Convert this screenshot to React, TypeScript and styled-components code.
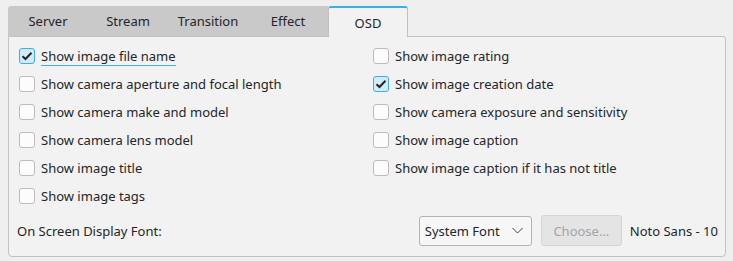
import React from "react";
import styled, { createGlobalStyle } from "styled-components";

const Global = createGlobalStyle`
  html, body { margin: 0; padding: 0; background: #efefef; }
  body { font-family: "Noto Sans", "DejaVu Sans", sans-serif; font-size: 13px; color: #232629; }
  * { box-sizing: border-box; }
`;

const Window = styled.div`
  width: 733px;
  height: 261px;
  padding: 6px 7px 5px 8px;
  display: flex;
  flex-direction: column;
`;

const TabBar = styled.div`
  display: flex;
  height: 31px;
  margin-bottom: -1px;
  position: relative;
  z-index: 1;
`;

const InactiveTabs = styled.div`
  display: flex;
  background: #c9c9c9;
  border-top-left-radius: 3px;
  height: 30px;
`;

const Tab = styled.div<{ $active?: boolean }>`
  width: 80px;
  display: flex;
  align-items: center;
  justify-content: center;
  height: ${(p) => (p.$active ? "31px" : "30px")};
  padding-top: ${(p) => (p.$active ? "1px" : "0")};
  ${(p) =>
    p.$active &&
    `
    background: #f2f2f2;
    border: 1px solid #bfbfbf;
    border-bottom: none;
    border-top: 2px solid #3daee9;
    border-radius: 3px 3px 0 0;
  `}
`;

const Panel = styled.div`
  flex: 1;
  background: #f2f2f2;
  border: 1px solid #c2c2c2;
  border-radius: 0 3px 4px 4px;
  padding: 5px 7px 10px 8px;
  display: flex;
  flex-direction: column;
`;

const Grid = styled.div`
  display: grid;
  grid-template-columns: 354px 1fr;
  grid-auto-rows: 28px;
`;

const Row = styled.label`
  display: flex;
  align-items: center;
  gap: 6px;
  padding-left: 2px;
`;

const Box = styled.span<{ $checked?: boolean }>`
  width: 16px;
  height: 16px;
  border-radius: 3px;
  border: 1px solid ${(p) => (p.$checked ? "#3daee9" : "#bcbcbc")};
  background: ${(p) => (p.$checked ? "#d3ebf8" : "#fcfcfc")};
  display: flex;
  align-items: center;
  justify-content: center;
  flex: none;
`;

const Label = styled.span<{ $focus?: boolean }>`
  line-height: 18px;
  ${(p) => p.$focus && `border-bottom: 1px solid #3daee9; line-height: 17px; margin-top: 1px;`}
`;

const Bottom = styled.div`
  margin-top: 5px;
  display: flex;
  align-items: center;
  height: 31px;
`;

const FontLabel = styled.span`
  flex: 1;
`;

const Combo = styled.div`
  width: 113px;
  height: 30px;
  border: 1px solid #b3b3b3;
  border-radius: 3px;
  background: #f7f7f7;
  display: flex;
  align-items: center;
  justify-content: space-between;
  padding: 0 8px 0 5px;
  margin-right: 9px;
`;

const Choose = styled.div`
  width: 81px;
  height: 31px;
  border: 1px solid #d4d4d4;
  border-radius: 3px;
  background: #e4e4e4;
  color: #a3a4a5;
  display: flex;
  align-items: center;
  justify-content: center;
  margin-right: 8px;
`;

const FontName = styled.span`
  margin-right: 0;
`;

const Check = () => (
  <svg width="12" height="10" viewBox="0 0 12 10">
    <path d="M1.5 5.2 L4.5 8 L10.5 1.8" fill="none" stroke="#232629" strokeWidth="2" />
  </svg>
);

const Chevron = () => (
  <svg width="11" height="7" viewBox="0 0 11 7">
    <path d="M0.5 1 L5.5 6 L10.5 1" fill="none" stroke="#3b3e41" strokeWidth="1" />
  </svg>
);

const items: [string, boolean, boolean][] = [
  ["Show image file name", true, true],
  ["Show image rating", false, false],
  ["Show camera aperture and focal length", false, false],
  ["Show image creation date", true, false],
  ["Show camera make and model", false, false],
  ["Show camera exposure and sensitivity", false, false],
  ["Show camera lens model", false, false],
  ["Show image caption", false, false],
  ["Show image title", false, false],
  ["Show image caption if it has not title", false, false],
  ["Show image tags", false, false],
];

export default function App() {
  return (
    <>
      <Global />
      <Window>
        <TabBar>
          <InactiveTabs>
            {["Server", "Stream", "Transition", "Effect"].map((t) => (
              <Tab key={t}>{t}</Tab>
            ))}
          </InactiveTabs>
          <Tab $active>OSD</Tab>
        </TabBar>
        <Panel>
          <Grid>
            {items.map(([text, checked, focus]) => (
              <Row key={text}>
                <Box $checked={checked}>{checked && <Check />}</Box>
                <Label $focus={focus}>{text}</Label>
              </Row>
            ))}
          </Grid>
          <Bottom>
            <FontLabel>On Screen Display Font:</FontLabel>
            <Combo>
              <span>System Font</span>
              <Chevron />
            </Combo>
            <Choose>Choose…</Choose>
            <FontName>Noto Sans - 10</FontName>
          </Bottom>
        </Panel>
      </Window>
    </>
  );
}
